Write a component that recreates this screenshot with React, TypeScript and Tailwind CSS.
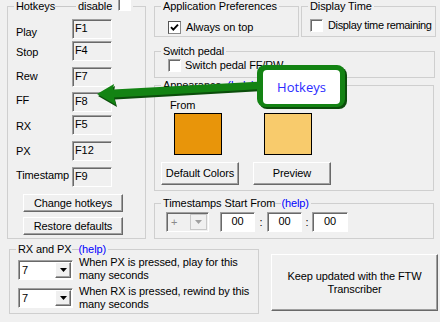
import type { ReactNode } from 'react'

const sunken =
  'border border-t-[#a0a0a0] border-l-[#a0a0a0] border-b-white border-r-white shadow-[inset_1px_1px_0_#696969]'
const raised =
  'border border-t-white border-l-white border-b-[#696969] border-r-[#696969] shadow-[inset_-1px_-1px_0_#a0a0a0]'
const rule = 'h-px bg-[#c8c8c8]'

function Group({ title, className, children }: { title: ReactNode; className: string; children?: ReactNode }) {
  return (
    <fieldset className={`min-w-0 border border-[#cfcfcf] ${className}`}>
      <legend className="ml-[6px] px-[2px]">
        <span className="flex h-[13px] items-center whitespace-nowrap">{title}</span>
      </legend>
      {children}
    </fieldset>
  )
}

function Help({ text, gap }: { text: string; gap: string }) {
  return (
    <>
      {text}
      <span className={`${rule} ${gap}`} />
      <span className="text-[#0000ff]">(help)</span>
    </>
  )
}

function Check({ checked, className = '' }: { checked?: boolean; className?: string }) {
  return (
    <span
      className={`flex h-[13px] w-[13px] shrink-0 items-center justify-center bg-white ${
        checked
          ? 'border border-t-[#555] border-l-[#555] border-b-[#888] border-r-[#888] bg-[#f4f4f4]'
          : sunken
      } ${className}`}
    >
      {checked && (
        <svg width="9" height="9" viewBox="0 0 9 9">
          <path d="M1 4.2 L3.3 6.6 L8 1.6" fill="none" stroke="#000" strokeWidth="1.9" />
        </svg>
      )}
    </span>
  )
}

function Btn({ className, children }: { className: string; children: ReactNode }) {
  return (
    <div className={`flex items-center justify-center bg-[#f0f0f0] text-center ${raised} ${className}`}>
      {children}
    </div>
  )
}

function Arrow({ color }: { color: string }) {
  return (
    <svg width="7" height="4" viewBox="0 0 7 4">
      <path d="M0 0 H7 L3.5 4 Z" fill={color} />
    </svg>
  )
}

function Combo({ value }: { value: string }) {
  return (
    <div className={`flex h-[20px] w-[55px] bg-white p-px ${sunken}`}>
      <span className="flex-1 pl-[2px] leading-[16px]">{value}</span>
      <span className={`flex w-[16px] items-center justify-center bg-[#f0f0f0] ${raised}`}>
        <Arrow color="#000" />
      </span>
    </div>
  )
}

function KeyBox({ value }: { value: string }) {
  return <div className={`h-[20px] w-[40px] bg-[#f0f0f0] pl-[2px] leading-[17px] ${sunken}`}>{value}</div>
}

function TimeBox({ className }: { className: string }) {
  return <div className={`h-[20px] bg-white text-center leading-[17px] ${sunken} ${className}`}>00</div>
}

export default function App() {
  return (
    <div className="relative h-[322px] w-[440px] overflow-hidden bg-[#f0f0f0] font-['Liberation_Sans',Arial,sans-serif] text-[11px] leading-[13px] tracking-[-0.1px] text-black">
      <div className="flex gap-[8px] pl-[7px]">
        <Group
          className="h-[239px] w-[139px]"
          title={
            <>
              Hotkeys
              <span className={`${rule} w-[21px]`} />
              <span className="ml-[2px]">disable</span>
              <Check className="-mt-[4px] ml-[6px]" />
            </>
          }
        >
          <div className="flex flex-col pl-[8px]">
            <div className="mt-[6px] flex items-start">
              <span className="mt-[7px] w-[56px]">Play</span>
              <KeyBox value="F1" />
            </div>
            <div className="mt-[2px] flex items-start">
              <span className="mt-[5px] w-[56px]">Stop</span>
              <KeyBox value="F4" />
            </div>
            <div className="mt-[6px] flex items-start">
              <span className="mt-[3px] w-[56px]">Rew</span>
              <KeyBox value="F7" />
            </div>
            <div className="mt-[5px] flex items-start">
              <span className="mt-[2px] w-[56px]">FF</span>
              <KeyBox value="F8" />
            </div>
            <div className="mt-[3px] flex items-start">
              <span className="mt-[5px] w-[56px]">RX</span>
              <KeyBox value="F5" />
            </div>
            <div className="mt-[6px] flex items-start">
              <span className="mt-[4px] w-[56px]">PX</span>
              <KeyBox value="F12" />
            </div>
            <div className="mt-[6px] flex items-start">
              <span className="mt-[2px] w-[56px]">Timestamp</span>
              <KeyBox value="F9" />
            </div>
            <Btn className="ml-[7px] mt-[7px] h-[18px] w-[100px]">Change hotkeys</Btn>
            <Btn className="ml-[7px] mt-[5px] h-[18px] w-[100px]">Restore defaults</Btn>
          </div>
        </Group>

        <div className="flex w-[282px] flex-col">
          <div className="flex gap-[2px]">
            <Group className="h-[37px] w-[145px]" title="Application Preferences">
              <div className="mt-[8px] flex items-center gap-[5px] pl-[13px]">
                <Check checked />
                <span>Always on top</span>
              </div>
            </Group>
            <Group className="h-[37px] w-[135px]" title="Display Time">
              <div className="mt-[6px] flex items-center gap-[5px] pl-[8px]">
                <Check />
                <span className="whitespace-nowrap tracking-[-0.35px]">Display time remaining</span>
              </div>
            </Group>
          </div>

          <Group className="mt-[8px] h-[33px] w-[281px]" title="Switch pedal">
            <div className="mt-px flex items-center gap-[4px] pl-[13px]">
              <Check />
              <span>Switch pedal FF/RW</span>
            </div>
          </Group>

          <Group className="mt-px h-[112px] w-[280px]" title={<Help text="Appearance" gap="w-[6px]" />}>
            <div className="mt-[7px] pl-[15px]">From</div>
            <div className="mt-px flex">
              <div className="ml-[19px] h-[42px] w-[48px] border border-black bg-[#e8950a]" />
              <div className="ml-[42px] h-[42px] w-[48px] border border-black bg-[#f8cb6c]" />
            </div>
            <div className="mt-[7px] flex">
              <Btn className="ml-[6px] h-[23px] w-[78px]">Default Colors</Btn>
              <Btn className="ml-[14px] h-[23px] w-[78px]">Preview</Btn>
            </div>
          </Group>

          <Group className="mt-[6px] h-[42px] w-[280px]" title={<Help text="Timestamps Start From" gap="w-[6px]" />}>
            <div className="mt-[2px] flex items-center">
              <div className={`ml-[11px] flex h-[20px] w-[43px] bg-[#f0f0f0] p-px ${sunken}`}>
                <span className="flex-1 pl-[3px] leading-[16px] text-[#8a8a8a]">+</span>
                <span className="flex w-[17px] items-center justify-center border border-[#c8c8c8] bg-[#f0f0f0]">
                  <Arrow color="#a0a0a0" />
                </span>
              </div>
              <TimeBox className="ml-[11px] w-[35px]" />
              <span className="w-[12px] text-center">:</span>
              <TimeBox className="w-[35px]" />
              <span className="w-[10px] text-center">:</span>
              <TimeBox className="w-[36px]" />
            </div>
          </Group>
        </div>
      </div>

      <div className="mt-[4px] flex pl-[9px]">
        <Group className="h-[71px] w-[250px]" title={<Help text="RX and PX" gap="w-[7px]" />}>
          <div className="flex items-start">
            <div className="ml-[8px] mt-[4px]">
              <Combo value="7" />
            </div>
            <p className="ml-[6px]">
              When PX is pressed, play for this
              <br />
              many seconds
            </p>
          </div>
          <div className="mt-[3px] flex items-start">
            <div className="ml-[8px] mt-[3px]">
              <Combo value="7" />
            </div>
            <p className="ml-[6px]">
              When RX is pressed, rewind by this
              <br />
              many seconds
            </p>
          </div>
        </Group>
        <Btn className="ml-[12px] mt-[11px] h-[57px] w-[167px]">
          Keep updated with the FTW
          <br />
          Transcriber
        </Btn>
      </div>

      {/* annotation overlay */}
      <svg className="pointer-events-none absolute left-0 top-0" width="440" height="322" viewBox="0 0 440 322">
        <polygon
          points="98,96 115,86 114,91.5 263,83.5 263,91 115,99.5 117,107"
          fill="#0b4d0b"
        />
        <polygon points="97,94 114,84 113,89.5 262,81.5 262,89 114,97.5 116,105" fill="#138313" />
      </svg>
      <div className="absolute left-[257px] top-[65px] h-[42px] w-[88px] rounded-[8px] bg-[#138313] pb-[3px] pl-[6px] pr-[5px] pt-[5px] shadow-[2px_2px_0_#0b4d0b]">
        <div className="flex h-full items-center justify-center rounded-[4px] bg-white font-['Open_Sans',sans-serif] text-[13px] tracking-normal text-[#2b2bff]">
          Hotkeys
        </div>
      </div>
    </div>
  )
}
